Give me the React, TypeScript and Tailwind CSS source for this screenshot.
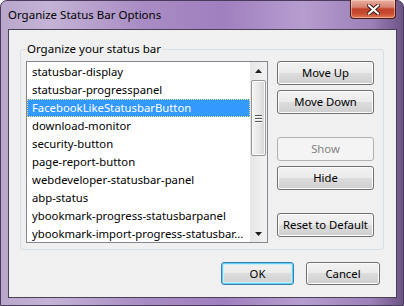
import React from "react";

const items = [
  "statusbar-display",
  "statusbar-progresspanel",
  "FacebookLikeStatusbarButton",
  "download-monitor",
  "security-button",
  "page-report-button",
  "webdeveloper-statusbar-panel",
  "abp-status",
  "ybookmark-progress-statusbarpanel",
  "ybookmark-import-progress-statusbar...",
];

function Btn({
  children,
  className = "",
  disabled,
  primary,
}: {
  children: React.ReactNode;
  className?: string;
  disabled?: boolean;
  primary?: boolean;
}) {
  if (disabled) {
    return (
      <div
        className={`flex items-center justify-center rounded-[3px] border border-[#adb2b5] bg-[#f4f4f4] text-[#838383] ${className}`}
      >
        {children}
      </div>
    );
  }
  return (
    <div
      className={`flex items-center justify-center rounded-[3px] border bg-[linear-gradient(to_bottom,#f2f2f2_0%,#ebebeb_50%,#dddddd_50%,#cfcfcf_100%)] text-black ${
        primary
          ? "border-[#3c7fb1] shadow-[inset_0_0_0_1px_#5fd0f5,inset_0_0_0_2px_#c6effc]"
          : "border-[#707070] shadow-[inset_0_0_0_1px_#fcfcfc]"
      } ${className}`}
    >
      {children}
    </div>
  );
}

function Arrow({ up }: { up?: boolean }) {
  return (
    <svg width="7" height="4" viewBox="0 0 7 4">
      <path d={up ? "M0 4 L3.5 0 L7 4 Z" : "M0 0 L3.5 4 L7 0 Z"} fill="#1e1e1e" />
    </svg>
  );
}

export default function App() {
  return (
    <div className="h-[306px] w-[404px] bg-white font-['Noto_Sans',sans-serif] text-[11.3px] leading-[16px]">
      <div className="flex h-full w-full flex-col rounded-t-[7px] border border-[#4a3a5c] bg-[linear-gradient(to_right,#b9a6cc_0%,#c4b3d6_12%,#a98cc4_35%,#a07fbf_55%,#b69dcf_75%,#9c80b8_92%,#6d5486_100%)]">
        {/* title bar */}
        <div className="flex h-[28px] justify-between">
          <div className="self-center pl-[7px] text-[11.5px] text-black">Organize Status Bar Options</div>
          <div className="-mt-px mr-[7px] flex h-[19px] w-[46px] items-center justify-center rounded-b-[4px] border border-t-0 border-[#4a1c16] bg-[linear-gradient(to_bottom,#eab0a2_0%,#d88270_40%,#c1412b_50%,#c84a30_75%,#e07a55_100%)] shadow-[inset_0_0_0_1px_rgba(255,220,210,0.5)]">
            <svg width="13" height="11" viewBox="0 0 13 11">
              <path d="M2 1.5 L11 9.5 M11 1.5 L2 9.5" stroke="#3b1810" strokeWidth="4" strokeLinecap="square" />
              <path d="M2 1.5 L11 9.5 M11 1.5 L2 9.5" stroke="#ffffff" strokeWidth="2.2" strokeLinecap="square" />
            </svg>
          </div>
        </div>

        {/* client area */}
        <div className="ml-[7px] mr-[6px] flex h-[269px] flex-col border border-[#4b4156] bg-[#f0f0f0] pl-[11px] pr-[12px] pt-[19px]">
          <div className="relative h-[201px] w-[364px] rounded-[3px] border border-[#d5dfe5] pl-[5px] pt-[11px]">
            <span className="absolute -top-[9px] left-[5px] bg-[#f0f0f0] px-px text-[11.5px] text-black">
              Organize your status bar
            </span>
            <div className="flex">
              {/* list box */}
              <div className="flex h-[182px] w-[242px] border border-[#828790] bg-white">
                <div className="flex-1 pt-px">
                  {items.map((it, i) => (
                    <div
                      key={it}
                      className={`flex h-[18px] items-center overflow-hidden whitespace-nowrap pl-[5px] ${
                        i === 2
                          ? "bg-[#3399ff] text-white outline-1 -outline-offset-1 outline-dotted outline-[#f3e48a]"
                          : "text-black"
                      }`}
                    >
                      {it}
                    </div>
                  ))}
                </div>
                {/* scrollbar */}
                <div className="flex w-[17px] flex-col bg-[linear-gradient(to_right,#e6e6e6_0%,#f2f2f2_100%)]">
                  <div className="flex h-[17px] items-center justify-center">
                    <Arrow up />
                  </div>
                  <div className="mx-px mt-px flex h-[76px] flex-col items-center justify-center gap-[2px] rounded-[2px] border border-[#979797] bg-[linear-gradient(to_right,#f4f4f4_0%,#e8e8e8_50%,#d5d5d5_100%)] shadow-[inset_0_0_0_1px_#fafafa]">
                    <div className="h-px w-[7px] bg-[#555] shadow-[0_1px_0_#fff]" />
                    <div className="h-px w-[7px] bg-[#555] shadow-[0_1px_0_#fff]" />
                    <div className="h-px w-[7px] bg-[#555] shadow-[0_1px_0_#fff]" />
                  </div>
                  <div className="flex-1" />
                  <div className="flex h-[17px] items-center justify-center">
                    <Arrow />
                  </div>
                </div>
              </div>

              {/* side buttons */}
              <div className="ml-[9px] flex w-[97px] flex-col">
                <Btn className="h-[24px]">Move Up</Btn>
                <Btn className="mt-[5px] h-[24px]">Move Down</Btn>
                <Btn className="mt-[23px] h-[24px]" disabled>
                  Show
                </Btn>
                <Btn className="mt-[5px] h-[24px]">Hide</Btn>
                <Btn className="mt-[23px] h-[24px]">Reset to Default</Btn>
              </div>
            </div>
          </div>

          {/* bottom row */}
          <div className="mt-[12px] flex justify-end gap-[12px] pr-[4px]">
            <Btn primary className="h-[23px] w-[73px]">
              OK
            </Btn>
            <Btn className="h-[23px] w-[74px]">Cancel</Btn>
          </div>
        </div>
      </div>
    </div>
  );
}
